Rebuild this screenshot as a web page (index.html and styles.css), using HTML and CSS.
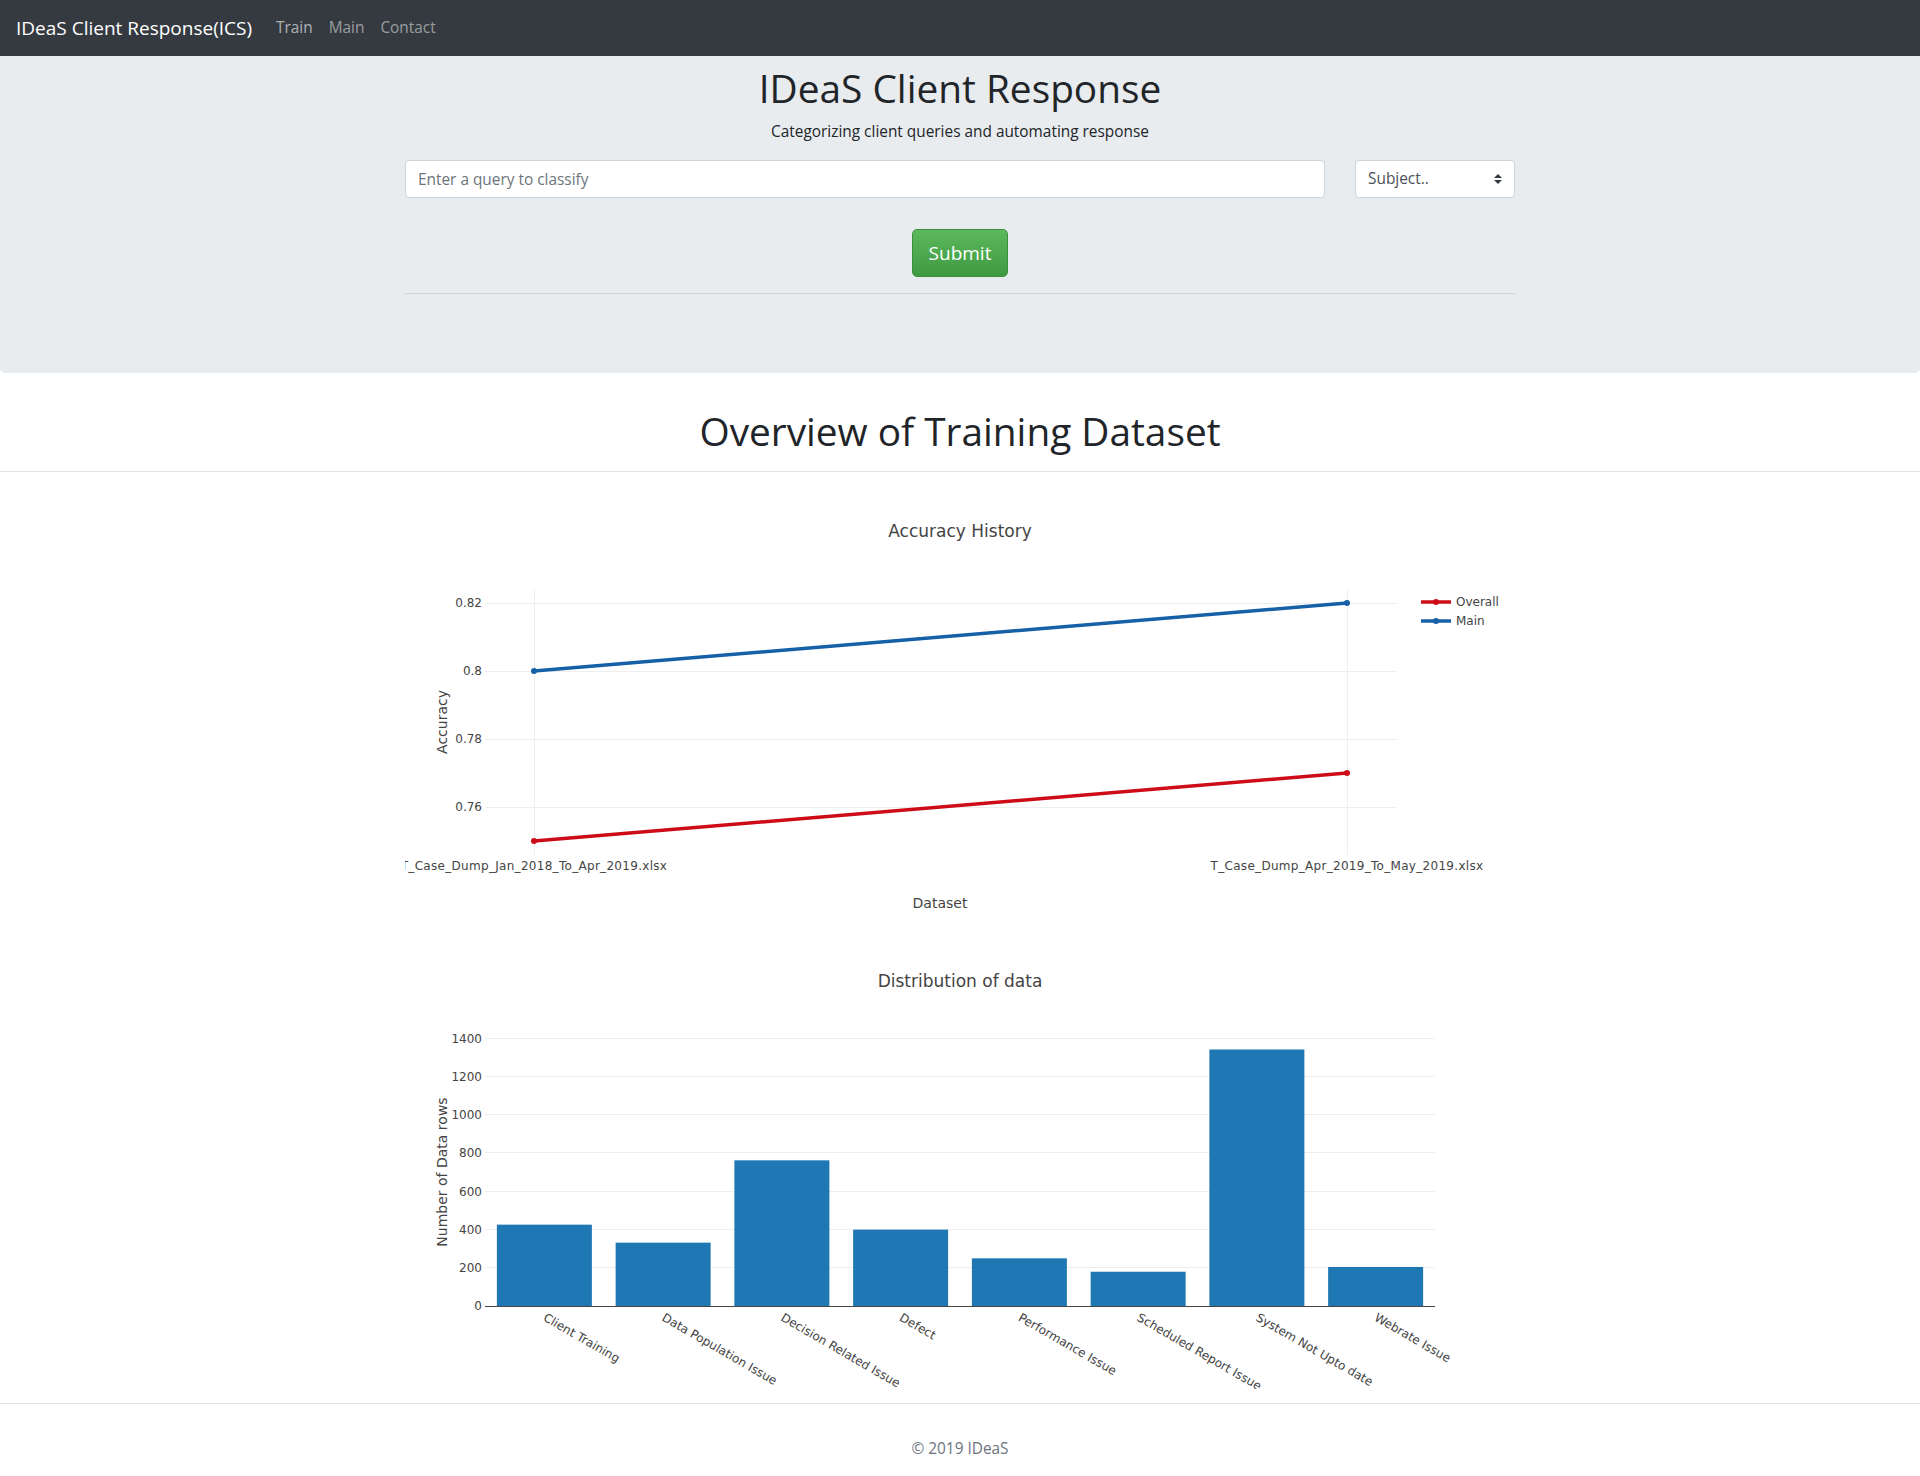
FILE: index.html
```html
<!DOCTYPE html>
<html lang="en">
<head>
<meta charset="utf-8">
<title>IDeaS Client Response</title>
<link rel="stylesheet" href="styles.css">
</head>
<body>
<nav class="navbar">
  <a class="brand" href="#">IDeaS Client Response(ICS)</a>
  <ul class="nav">
    <li><a class="nav-link nav-link-train" href="#">Train</a></li>
    <li><a class="nav-link" href="#">Main</a></li>
    <li><a class="nav-link" href="#">Contact</a></li>
  </ul>
</nav>

<section class="jumbotron">
  <div class="container">
    <h1 class="title">IDeaS Client Response</h1>
    <p class="subtitle">Categorizing client queries and automating response</p>
    <form class="query-form">
      <div class="form-row">
        <input class="form-control" type="text" placeholder="Enter a query to classify">
        <div class="select">
          <span>Subject..</span>
          <svg class="select-arrow" width="8" height="10" viewBox="0 0 4 5"><path d="M2 0L0 2h4zm0 5L0 3h4z"/></svg>
        </div>
      </div>
      <div class="submit-row">
        <button class="btn-submit" type="button">Submit</button>
      </div>
    </form>
    <hr class="jumbo-rule">
  </div>
</section>

<h1 class="section-title">Overview of Training Dataset</h1>
<hr class="full-rule">

<main class="container charts">
  <div class="chart">
    <svg class="plot" width="1110" height="450" viewBox="0 0 1110 450">
      <text class="plot-title" x="555" y="48" text-anchor="middle">Accuracy History</text>
      <g class="grid">
        <line x1="80" x2="991" y1="114.5" y2="114.5"/>
        <line x1="80" x2="991" y1="182.5" y2="182.5"/>
        <line x1="80" x2="991" y1="250.5" y2="250.5"/>
        <line x1="80" x2="991" y1="318.5" y2="318.5"/>
        <line x1="129.5" x2="129.5" y1="100" y2="366"/>
        <line x1="942.5" x2="942.5" y1="100" y2="366"/>
      </g>
      <g class="tick">
        <text x="77" y="118" text-anchor="end">0.82</text>
        <text x="77" y="186" text-anchor="end">0.8</text>
        <text x="77" y="254" text-anchor="end">0.78</text>
        <text x="77" y="322" text-anchor="end">0.76</text>
        <text class="file-label" x="129" y="381" text-anchor="middle">T_Case_Dump_Jan_2018_To_Apr_2019.xlsx</text>
        <text class="file-label" x="942" y="381" text-anchor="middle">T_Case_Dump_Apr_2019_To_May_2019.xlsx</text>
      </g>
      <text class="axis-title" x="535" y="419" text-anchor="middle">Dataset</text>
      <text class="axis-title" transform="translate(42,233) rotate(-90)" text-anchor="middle">Accuracy</text>
      <g class="trace-overall">
        <line x1="129" y1="352" x2="942" y2="284"/>
        <circle cx="129" cy="352" r="3"/>
        <circle cx="942" cy="284" r="3"/>
      </g>
      <g class="trace-main">
        <line x1="129" y1="182" x2="942" y2="114"/>
        <circle cx="129" cy="182" r="3"/>
        <circle cx="942" cy="114" r="3"/>
      </g>
      <g class="legend">
        <g class="trace-overall">
          <line x1="1016" x2="1046" y1="113" y2="113"/>
          <circle cx="1031" cy="113" r="3"/>
        </g>
        <text class="tick" x="1051" y="117">Overall</text>
        <g class="trace-main">
          <line x1="1016" x2="1046" y1="132" y2="132"/>
          <circle cx="1031" cy="132" r="3"/>
        </g>
        <text class="tick" x="1051" y="136">Main</text>
      </g>
    </svg>
  </div>

  <div class="chart">
    <svg class="plot" width="1110" height="450" viewBox="0 0 1110 450">
      <text class="plot-title" x="555" y="48" text-anchor="middle">Distribution of data</text>
      <g class="grid">
        <line x1="80" x2="1030" y1="328.5" y2="328.5"/>
        <line x1="80" x2="1030" y1="290.5" y2="290.5"/>
        <line x1="80" x2="1030" y1="252.5" y2="252.5"/>
        <line x1="80" x2="1030" y1="213.5" y2="213.5"/>
        <line x1="80" x2="1030" y1="175.5" y2="175.5"/>
        <line x1="80" x2="1030" y1="137.5" y2="137.5"/>
        <line x1="80" x2="1030" y1="99.5" y2="99.5"/>
      </g>
      <g class="bars">
        <rect x="91.88" y="285.64" width="95" height="81.36"/>
        <rect x="210.63" y="303.64" width="95" height="63.36"/>
        <rect x="329.38" y="221.32" width="95" height="145.68"/>
        <rect x="448.13" y="290.62" width="95" height="76.38"/>
        <rect x="566.88" y="319.33" width="95" height="47.67"/>
        <rect x="685.63" y="332.73" width="95" height="34.27"/>
        <rect x="804.38" y="110.49" width="95" height="256.51"/>
        <rect x="923.13" y="327.95" width="95" height="39.05"/>
      </g>
      <line class="zeroline" x1="80" x2="1030" y1="367.5" y2="367.5"/>
      <g class="tick">
        <text x="77" y="371" text-anchor="end">0</text>
        <text x="77" y="333" text-anchor="end">200</text>
        <text x="77" y="295" text-anchor="end">400</text>
        <text x="77" y="257" text-anchor="end">600</text>
        <text x="77" y="218" text-anchor="end">800</text>
        <text x="77" y="180" text-anchor="end">1000</text>
        <text x="77" y="142" text-anchor="end">1200</text>
        <text x="77" y="104" text-anchor="end">1400</text>
        <text x="137.4" y="381" transform="rotate(30 137.4 381)">Client Training</text>
        <text x="256.1" y="381" transform="rotate(30 256.1 381)">Data Population Issue</text>
        <text x="374.9" y="381" transform="rotate(30 374.9 381)">Decision Related Issue</text>
        <text x="493.6" y="381" transform="rotate(30 493.6 381)">Defect</text>
        <text x="612.4" y="381" transform="rotate(30 612.4 381)">Performance Issue</text>
        <text x="731.1" y="381" transform="rotate(30 731.1 381)">Scheduled Report Issue</text>
        <text x="849.9" y="381" transform="rotate(30 849.9 381)">System Not Upto date</text>
        <text x="968.6" y="381" transform="rotate(30 968.6 381)">Webrate Issue</text>
      </g>
      <text class="axis-title" transform="translate(42,233) rotate(-90)" text-anchor="middle">Number of Data rows</text>
    </svg>
  </div>
</main>

<footer class="footer">
  <p>© 2019 IDeaS</p>
</footer>
</body>
</html>
```

FILE: styles.css
```css
* {
  box-sizing: border-box;
}

body {
  margin: 0;
  font-family: "Open Sans", "Segoe UI", "Noto Sans", sans-serif;
  font-size: 15.4px;
  line-height: 24px;
  color: #212529;
  background: #fff;
}

/* Navbar */
.navbar {
  display: flex;
  align-items: center;
  height: 56px;
  padding: 8px 16px;
  background: #343a40;
}

.brand {
  font-size: 19px;
  line-height: 30px;
  padding: 5px 0;
  margin-right: 16px;
  color: #fff;
  text-decoration: none;
  white-space: nowrap;
}

.nav {
  display: flex;
  list-style: none;
  margin: 0;
  padding: 0;
}

.nav-link {
  display: block;
  padding: 8px;
  color: rgba(255, 255, 255, 0.5);
  text-decoration: none;
}

.nav-link-train {
  color: rgba(255, 255, 255, 0.62);
}

/* Jumbotron */
.jumbotron {
  background: #e9ecef;
  padding: 8px 0 63px;
  margin-bottom: 34px;
  border-radius: 0 0 5px 5px;
}

.container {
  width: 1110px;
  margin: 0 auto;
}

.title {
  font-size: 38.8px;
  font-weight: 500;
  line-height: 48px;
  margin: 0 0 8px;
  text-align: center;
}

.subtitle {
  margin: 0 0 16px;
  text-align: center;
}

.form-row {
  display: grid;
  grid-template-columns: 920px 160px;
  column-gap: 30px;
}

.form-control {
  display: block;
  width: 100%;
  height: 38px;
  padding: 6px 12px;
  font: inherit;
  color: #495057;
  background: #fff;
  border: 1px solid #ced4da;
  border-radius: 4px;
}

.form-control::placeholder {
  color: #6c757d;
  opacity: 1;
}

.select {
  display: flex;
  align-items: center;
  justify-content: space-between;
  height: 38px;
  padding: 0 12px;
  color: #495057;
  background: #fff;
  border: 1px solid #ced4da;
  border-radius: 4px;
}

.select-arrow {
  fill: #343a40;
}

.submit-row {
  display: flex;
  justify-content: center;
  padding-top: 31px;
}

.btn-submit {
  font-family: inherit;
  font-size: 19px;
  line-height: 30px;
  padding: 8px 16px;
  color: #fff;
  background: linear-gradient(#5cb85c, #3f9a42);
  border: 1px solid #3d8f3f;
  border-radius: 5px;
  cursor: pointer;
}

.jumbo-rule {
  margin: 16px 0;
  height: 0;
  border: 0;
  border-top: 1px solid rgba(0, 0, 0, 0.1);
}

/* Section heading */
.section-title {
  font-size: 38.8px;
  font-weight: 500;
  line-height: 48px;
  margin: 2px 0 0;
  text-align: center;
}

.full-rule {
  margin: 16px 0 17px;
  height: 0;
  border: 0;
  border-top: 1px solid rgba(0, 0, 0, 0.1);
}

/* Charts */
.chart {
  height: 450px;
}

.plot {
  display: block;
  overflow: hidden;
}

.plot text {
  font-family: "DejaVu Sans", Verdana, sans-serif;
  fill: #444;
}

.plot .tick,
.plot .tick text {
  font-size: 12px;
}

.plot .file-label {
  letter-spacing: 0.3px;
}

.plot .axis-title {
  font-size: 14px;
}

.plot .plot-title {
  font-size: 17px;
}

.grid line {
  stroke: #eee;
  stroke-width: 1;
}

.zeroline {
  stroke: #444;
  stroke-width: 1;
}

.bars rect {
  fill: #1f77b4;
}

.trace-overall line {
  stroke: rgb(205, 12, 24);
  stroke-width: 3.5;
}

.trace-overall circle {
  fill: rgb(205, 12, 24);
}

.trace-main line {
  stroke: rgb(22, 96, 167);
  stroke-width: 3.5;
}

.trace-main circle {
  fill: rgb(22, 96, 167);
}

/* Footer */
.footer {
  margin-top: 14px;
  padding: 33px 0 15px;
  border-top: 1px solid #e5e5e5;
  text-align: center;
  color: #6c757d;
}

.footer p {
  margin: 0;
}
```
